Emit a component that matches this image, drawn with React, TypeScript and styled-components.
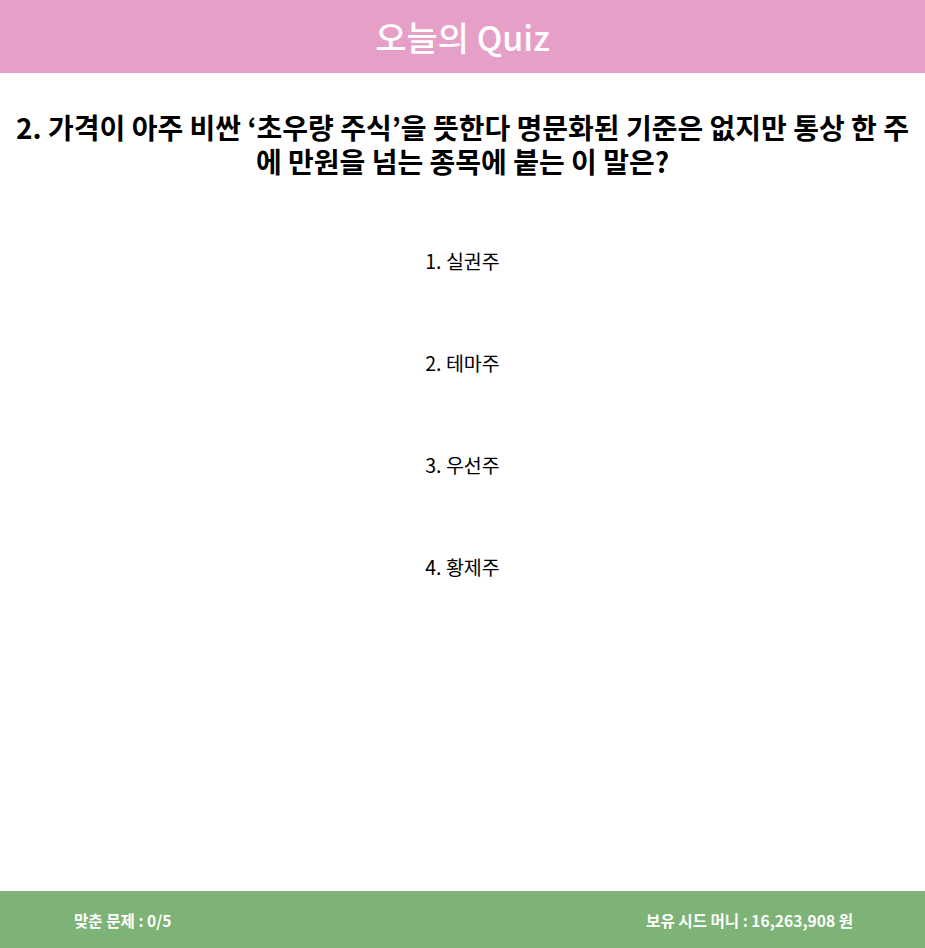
import React from "react";
import styled, { createGlobalStyle } from "styled-components";

const Global = createGlobalStyle`
  html, body { margin: 0; padding: 0; background: #ffffff; }
  body { font-family: "Noto Sans CJK KR", "Noto Sans", sans-serif; }
`;

const Page = styled.div`
  width: 925px;
  height: 948px;
  display: flex;
  flex-direction: column;
`;

const Header = styled.header`
  height: 73px;
  background: #e6a0c8;
  display: flex;
  align-items: center;
  justify-content: center;
`;

const Title = styled.h1`
  margin: 0;
  color: #ffffff;
  font-size: 34px;
  font-weight: 500;
  line-height: 40px;
`;

const Main = styled.main`
  flex: 1;
  display: flex;
  flex-direction: column;
  align-items: center;
  padding: 37px 6px 0;
`;

const Question = styled.h2`
  margin: 0;
  text-align: center;
  font-size: 28px;
  font-weight: 700;
  line-height: 34px;
  color: #000;
  white-space: nowrap;
`;

const Options = styled.ul`
  list-style: none;
  margin: 70px 0 0;
  padding: 0;
  display: flex;
  flex-direction: column;
  align-items: center;
  gap: 76px;
`;

const Option = styled.li`
  font-size: 19.5px;
  line-height: 26px;
  color: #000;
  cursor: pointer;
`;

const Footer = styled.footer`
  height: 57px;
  background: #7db376;
  display: flex;
  align-items: center;
  justify-content: space-between;
  padding: 0 72px 0 74px;
  color: #ffffff;
  font-size: 15.6px;
  font-weight: 700;
`;

const options = ["1. 실권주", "2. 테마주", "3. 우선주", "4. 황제주"];

export default function App() {
  return (
    <Page>
      <Global />
      <Header>
        <Title>오늘의 Quiz</Title>
      </Header>
      <Main>
        <Question>
          2. 가격이 아주 비싼 ‘초우량 주식’을 뜻한다 명문화된 기준은 없지만 통상 한 주
          <br />에 만원을 넘는 종목에 붙는 이 말은?
        </Question>
        <Options>
          {options.map((o) => (
            <Option key={o}>{o}</Option>
          ))}
        </Options>
      </Main>
      <Footer>
        <span>맞춘 문제 : 0/5</span>
        <span>보유 시드 머니 : 16,263,908 원</span>
      </Footer>
    </Page>
  );
}
